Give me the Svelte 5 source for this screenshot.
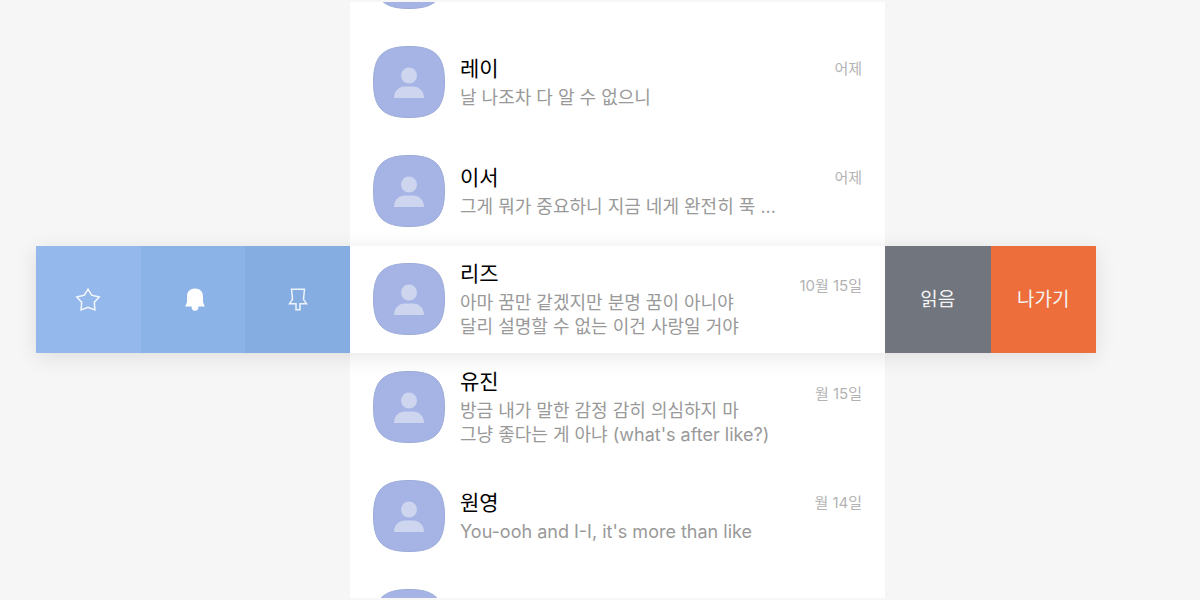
<script>
  const before = [
    { name: '', lines: [], date: '' },
    { name: '레이', lines: ['날 나조차 다 알 수 없으니'], date: '어제' },
    { name: '이서', lines: ['그게 뭐가 중요하니 지금 네게 완전히 푹 ...'], date: '어제' }
  ];
  const active = {
    name: '리즈',
    lines: ['아마 꿈만 같겠지만 분명 꿈이 아니야', '달리 설명할 수 없는 이건 사랑일 거야'],
    date: '10월 15일'
  };
  const after = [
    {
      name: '유진',
      lines: ['방금 내가 말한 감정 감히 의심하지 마', "그냥 좋다는 게 아냐 (what's after like?)"],
      date: '월 15일'
    },
    { name: '원영', lines: ["You-ooh and I-I, it's more than like"], date: '월 14일' },
    { name: '', lines: [], date: '' }
  ];
</script>

{#snippet chat(item)}
  <svg class="avatar" viewBox="0 0 72 72" aria-hidden="true">
    <path
      d="M36 .5C62 .5 71.500 10 71.500 36S62 71.500 36 71.500.5 62 .5 36 10 .5 36 .5Z"
      fill="#a5b4e5"
      stroke="#9cabd9"
    />
    <circle cx="36" cy="29.500" r="8" fill="#ced5ef" />
    <path d="M21 52C21 45 26 40.500 32 40.500H40C46 40.500 51 45 51 52Z" fill="#ced5ef" />
  </svg>
  {#if item.name}
    <div class="text">
      <h2>{item.name}</h2>
      {#each item.lines as line}
        <p>{line}</p>
      {/each}
    </div>
    <time>{item.date}</time>
  {/if}
{/snippet}

<main>
  <ul class="list upper">
    {#each before as item}
      <li class="row">{@render chat(item)}</li>
    {/each}
  </ul>

  <section class="swipe">
    <div class="actions">
      <button class="star" aria-label="즐겨찾기">
        <svg width="26" height="26" viewBox="0 0 26 26" fill="none" stroke="#f4f8fe" stroke-width="1.500">
          <path d="M13 2.200 16.600 8.200 24.200 9.900 19.300 15.200 19.900 23 13 20.400 6.100 23 6.700 15.200 1.800 9.900 9.400 8.200Z" />
        </svg>
      </button>
      <button class="bell" aria-label="알림">
        <svg width="26" height="26" viewBox="0 0 26 26" fill="#fff">
          <path d="M7 9.500C7 4.500 10 1.500 15 1.500S23 4.500 23 9.500V15L24.800 19.500H18.500C18.500 22.300 17.300 23.700 15 23.700S11.500 22.300 11.500 19.500H5.200L7 15Z" />
        </svg>
      </button>
      <button class="pin" aria-label="상단 고정">
        <svg width="26" height="26" viewBox="0 0 26 26" fill="none" stroke="#eef4fc" stroke-width="1.500">
          <path d="M6.500 2.300H19.500L18.500 12.300 21.500 16.700H15V22.700H11V16.700H4.500L7.500 12.300Z" />
        </svg>
      </button>
    </div>
    <div class="row">{@render chat(active)}</div>
    <div class="actions">
      <button class="read">읽음</button>
      <button class="leave">나가기</button>
    </div>
  </section>

  <ul class="list">
    {#each after as item}
      <li class="row">{@render chat(item)}</li>
    {/each}
  </ul>
</main>

<style>
  :global(body) {
    margin: 0;
    background: #f6f6f6;
  }
  main {
    box-sizing: border-box;
    height: 100vh;
    min-height: 600px;
    padding: 2px 104px 2px 36px;
    display: grid;
    grid-template-columns: 314px minmax(0, 1fr) 211px;
    grid-template-rows: 244px auto minmax(0, 1fr);
    overflow: hidden;
    font-family: Inter, 'Noto Sans CJK KR', sans-serif;
  }
  .list {
    grid-column: 2;
    margin: 0;
    padding: 0;
    list-style: none;
    display: flex;
    flex-direction: column;
    overflow: hidden;
    background: #fff;
  }
  .upper {
    justify-content: flex-end;
  }
  .row {
    box-sizing: border-box;
    flex: none;
    height: 109px;
    padding: 0 23px 2px;
    display: flex;
    align-items: center;
    background: #fff;
  }
  .avatar {
    flex: none;
    width: 72px;
    height: 72px;
    margin-right: 15px;
  }
  .text {
    flex: 1;
    min-width: 0;
    white-space: nowrap;
  }
  h2,
  p {
    margin: 0;
    font-weight: 400;
  }
  h2 {
    padding-bottom: 2px;
    font-size: 21px;
    line-height: 30px;
    color: #000;
  }
  p {
    font-size: 18px;
    line-height: 24px;
    color: #999;
  }
  time {
    padding-bottom: 26px;
    font-size: 15px;
    line-height: 20px;
    color: #b3b3b3;
    white-space: nowrap;
  }
  .swipe {
    position: relative;
    z-index: 1;
    grid-column: 1 / -1;
    display: grid;
    grid-template-columns: subgrid;
    box-shadow: 0 4px 20px rgba(0, 0, 0, 0.1);
  }
  .swipe .row {
    height: 107px;
  }
  .actions {
    display: flex;
  }
  button {
    flex: 1;
    display: flex;
    align-items: center;
    justify-content: center;
    padding: 0;
    border: 0;
    font: inherit;
    font-size: 19px;
    line-height: 24px;
    color: #f4f4f4;
    cursor: pointer;
  }
  .star {
    background: #95b8ec;
  }
  .bell {
    background: #8bb3e7;
  }
  .pin {
    background: #85ade1;
  }
  .read {
    background: #71757e;
  }
  .leave {
    background: #ed6d3b;
  }
</style>
